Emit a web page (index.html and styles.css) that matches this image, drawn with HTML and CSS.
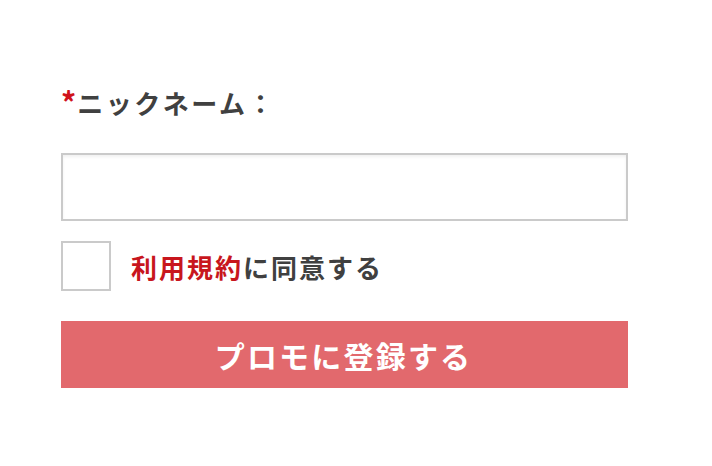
FILE: index.html
```html
<!DOCTYPE html>
<html lang="ja">
<head>
<meta charset="utf-8">
<link rel="stylesheet" href="styles.css">
</head>
<body>
<form class="form">
  <label class="label"><span class="req">*</span>ニックネーム：</label>
  <input class="input" type="text">
  <div class="agree">
    <span class="check"></span>
    <span class="agree-text"><span class="link">利用規約</span>に同意する</span>
  </div>
  <button class="submit" type="button">プロモに登録する</button>
</form>
</body>
</html>
```
FILE: styles.css
```css
* { box-sizing: border-box; }
body {
  margin: 0;
  background: #fff;
  font-family: "Noto Sans CJK JP", "Noto Sans", sans-serif;
}
.form {
  width: 567px;
  margin-left: 61px;
  padding-top: 84px;
  display: flex;
  flex-direction: column;
}
.label {
  font-size: 26px;
  font-weight: 700;
  color: #404040;
  line-height: 38px;
  letter-spacing: 2.5px;
}
.req {
  color: #d0121b;
  font-size: 30px;
  line-height: 1;
  letter-spacing: 0;
  margin-right: 1px;
}
.input {
  margin-top: 31px;
  height: 68px;
  border: 2px solid #cacaca;
  box-shadow: inset 0 2px 3px rgba(0,0,0,0.06);
  background: #fff;
  outline: none;
}
.agree {
  margin-top: 20px;
  display: flex;
  align-items: center;
  gap: 20px;
}
.check {
  width: 50px;
  height: 50px;
  border: 2px solid #cacaca;
  background: #fff;
}
.agree-text {
  font-size: 26px;
  font-weight: 700;
  color: #404040;
  letter-spacing: 2px;
}
.link { color: #c8161d; }
.submit {
  margin-top: 30px;
  height: 67px;
  border: none;
  background: #e2696d;
  color: #fff;
  font-family: inherit;
  font-size: 30px;
  font-weight: 700;
  letter-spacing: 2.2px;
  padding-left: 4px;
}
```
